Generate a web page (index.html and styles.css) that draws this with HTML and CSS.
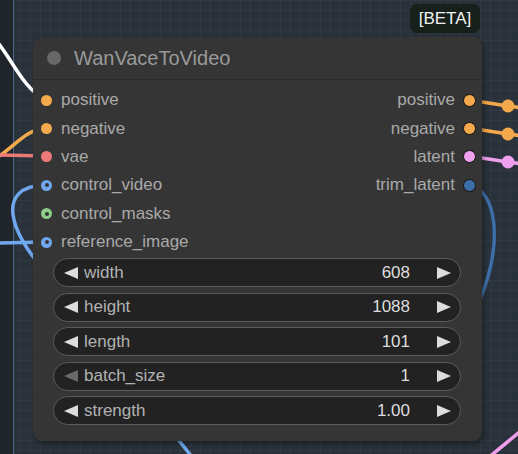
FILE: index.html
```html
<!DOCTYPE html>
<html lang="en">
<head>
    <meta charset="UTF-8">
    <meta name="viewport" content="width=device-width, initial-scale=1.0">
    <title>WanVaceToVideo</title>
    <link rel="stylesheet" href="styles.css">
</head>
<body>
    <div class="canvas">
        <div class="side-strip"></div>

        <!-- links, drawn under the node -->
        <svg class="links" width="518" height="454" viewBox="0 0 518 454">
            <path d="M -6 38 C 12 58, 22 88, 46 100" stroke="#ffffff" />
            <path d="M -4 158 C 14 148, 24 130, 46 128" stroke="#f4aa4c" />
            <path d="M -2 155 L 46 156" stroke="#ee7a78" />
            <path d="M 46 185 C -8 186, 14 236, 40 265 L 196 462" stroke="#6fa8ee" />
            <path d="M -2 243 L 46 242" stroke="#6fa8ee" />
            <path d="M 469 100 L 508 106 L 530 109" stroke="#f4aa4c" />
            <path d="M 469 128 L 508 134 L 530 137" stroke="#f4aa4c" />
            <path d="M 469 156 L 508 162 L 530 165" stroke="#eea0ee" />
            <path d="M 469 185 C 496 190, 504 240, 480 300" stroke="#3d6ea8" />
            <path d="M 488 458 L 522 430" stroke="#eea0ee" />
            <circle cx="508" cy="106" r="6.5" fill="#f4aa4c" />
            <circle cx="508" cy="134" r="6.5" fill="#f4aa4c" />
            <circle cx="508" cy="162" r="6.5" fill="#eea0ee" />
        </svg>

        <div class="badge">[BETA]</div>

        <div class="node">
            <div class="node-title">
                <span class="title-dot"></span>
                <span>WanVaceToVideo</span>
            </div>

            <div class="slots">
                <div class="slot-col">
                    <div class="slot"><span class="dot orange"></span>positive</div>
                    <div class="slot"><span class="dot orange"></span>negative</div>
                    <div class="slot"><span class="dot red"></span>vae</div>
                    <div class="slot"><span class="dot ring blue"></span>control_video</div>
                    <div class="slot"><span class="dot ring green"></span>control_masks</div>
                    <div class="slot"><span class="dot ring blue"></span>reference_image</div>
                </div>
                <div class="slot-col out">
                    <div class="slot">positive<span class="dot orange"></span></div>
                    <div class="slot">negative<span class="dot orange"></span></div>
                    <div class="slot">latent<span class="dot pink"></span></div>
                    <div class="slot">trim_latent<span class="dot navy"></span></div>
                </div>
            </div>

            <div class="widgets">
                <div class="widget">
                    <span class="arrow-left"></span>
                    <span class="w-label">width</span>
                    <span class="w-value">608</span>
                    <span class="arrow-right"></span>
                </div>
                <div class="widget">
                    <span class="arrow-left"></span>
                    <span class="w-label">height</span>
                    <span class="w-value">1088</span>
                    <span class="arrow-right"></span>
                </div>
                <div class="widget">
                    <span class="arrow-left"></span>
                    <span class="w-label">length</span>
                    <span class="w-value">101</span>
                    <span class="arrow-right"></span>
                </div>
                <div class="widget">
                    <span class="arrow-left dim"></span>
                    <span class="w-label">batch_size</span>
                    <span class="w-value">1</span>
                    <span class="arrow-right"></span>
                </div>
                <div class="widget">
                    <span class="arrow-left"></span>
                    <span class="w-label">strength</span>
                    <span class="w-value">1.00</span>
                    <span class="arrow-right"></span>
                </div>
            </div>
        </div>
    </div>
</body>
</html>
```

FILE: styles.css
```css
body {
    margin: 0;
    font-family: "Liberation Sans", Arial, sans-serif;
    background-color: #29313a;
}

.canvas {
    position: relative;
    width: 518px;
    height: 454px;
    overflow: hidden;
    background-color: #29313a;
    background-image:
        linear-gradient(to right, rgba(255, 255, 255, 0.035) 1px, transparent 1px),
        linear-gradient(to bottom, rgba(255, 255, 255, 0.035) 1px, transparent 1px);
    background-size: 10px 10px;
}

/* edge of something off to the left */
.side-strip {
    position: absolute;
    left: 0;
    top: 0;
    width: 13px;
    height: 454px;
    background-color: #20252b;
    border-right: 1px solid #47688a;
}

.links {
    position: absolute;
    left: 0;
    top: 0;
}

.links path {
    fill: none;
    stroke-width: 3.5;
    stroke-linecap: round;
}

.badge {
    position: absolute;
    left: 410px;
    top: 4px;
    width: 70px;
    height: 29px;
    box-sizing: border-box;
    border-radius: 7px;
    background-color: #17201a;
    color: #f2f2f2;
    font-size: 17px;
    display: flex;
    align-items: center;
    justify-content: center;
}

.node {
    position: absolute;
    left: 33px;
    top: 37px;
    width: 449px;
    height: 404px;
    background-color: #353535;
    border-radius: 9px;
    box-shadow: 2px 3px 5px rgba(0, 0, 0, 0.35);
    display: flex;
    flex-direction: column;
}

.node-title {
    height: 42px;
    border-bottom: 1px solid #2b2b2b;
    display: flex;
    align-items: center;
    gap: 13px;
    padding-left: 14px;
    color: #9a9a9a;
    font-size: 20px;
}

.title-dot {
    width: 14px;
    height: 14px;
    border-radius: 50%;
    background-color: #676767;
}

.slots {
    display: flex;
    justify-content: space-between;
    padding-top: 6px;
}

.slot-col {
    display: flex;
    flex-direction: column;
}

.slot {
    height: 28.4px;
    display: flex;
    align-items: center;
    gap: 9px;
    padding-left: 8px;
    color: #a9a9a9;
    font-size: 17px;
}

.slot-col.out .slot {
    justify-content: flex-end;
    padding-left: 0;
    padding-right: 6px;
    gap: 8px;
}

.dot {
    width: 11px;
    height: 11px;
    border-radius: 50%;
    position: relative;
}

.slot-col.out .dot {
    box-sizing: border-box;
    width: 13px;
    height: 13px;
    border: 1.5px solid #111;
}

.dot.ring::after {
    content: "";
    position: absolute;
    left: 3.5px;
    top: 3.5px;
    width: 4px;
    height: 4px;
    border-radius: 50%;
    background-color: #353535;
}

.orange { background-color: #f4aa4c; }
.red { background-color: #ee7a78; }
.blue { background-color: #6fa8ee; }
.green { background-color: #8ccc86; }
.pink { background-color: #eea0ee; }
.navy { background-color: #3d6ea8; }

.widgets {
    display: flex;
    flex-direction: column;
    gap: 5.5px;
    padding: 2px 21px 0 20px;
}

.widget {
    height: 29px;
    box-sizing: border-box;
    border: 1px solid #5c5c5c;
    border-radius: 15px;
    background-color: #222222;
    display: flex;
    align-items: center;
    padding: 0 9px 0 10px;
    font-size: 17px;
}

.arrow-left {
    width: 0;
    height: 0;
    border-top: 6.5px solid transparent;
    border-bottom: 6.5px solid transparent;
    border-right: 14px solid #dddddd;
}

.arrow-left.dim {
    border-right-color: #686868;
}

.arrow-right {
    width: 0;
    height: 0;
    border-top: 6.5px solid transparent;
    border-bottom: 6.5px solid transparent;
    border-left: 14px solid #dddddd;
}

.w-label {
    margin-left: 6px;
    color: #b2b2b2;
    flex: 1;
}

.w-value {
    color: #dddddd;
    margin-right: 27px;
}
```
